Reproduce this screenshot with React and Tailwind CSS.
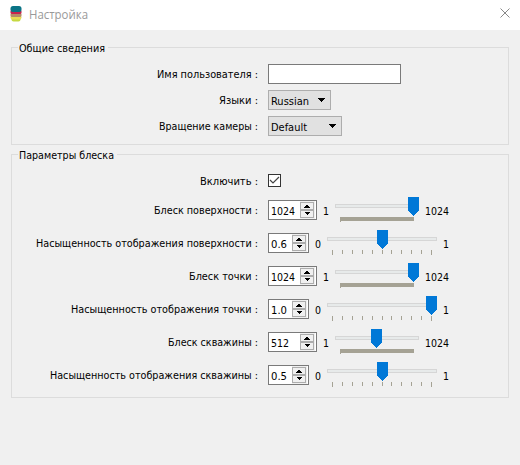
function Txt({ children, w, className = "" }) {
  return (
    <svg width={w} height="16" className={"block shrink-0 overflow-visible " + className}>
      <text x="0" y="12" textLength={w} lengthAdjust="spacingAndGlyphs" fill="currentColor">
        {children}
      </text>
    </svg>
  );
}

function Group({ title, titleWidth, className, children }) {
  return (
    <fieldset className={"relative ml-[11px] w-[498px] border border-[#dcdcdc] " + className}>
      <div className="absolute left-[6px] top-[-8px] bg-[#f0f0f0] pl-[1px] pr-[3px]">
        <Txt w={titleWidth}>{title}</Txt>
      </div>
      {children}
    </fieldset>
  );
}

function Row({ label, w, className = "", children }) {
  return (
    <div className={"flex h-5 items-center " + className}>
      <div className="mr-[10px] flex w-[246px] shrink-0 justify-end">
        <Txt w={w}>{label}</Txt>
      </div>
      {children}
    </div>
  );
}

function Select({ value, w, className }) {
  return (
    <div className={"flex h-5 items-center justify-between border border-[#adadad] bg-[#e1e1e1] pl-[2px] pr-[4px] " + className}>
      <Txt w={w} className="mt-[2px]">{value}</Txt>
      <svg width="8" height="4" shapeRendering="crispEdges">
        <path d="M0 0h7v1h-1v1h-1v1h-1v1h-1v-1h-1v-1h-1v-1h-1z" />
      </svg>
    </div>
  );
}

function SpinBox({ value, w, className }) {
  return (
    <div className={"flex h-5 shrink-0 items-center justify-between border border-[#7a7a7a] bg-white pr-px pl-[2px] " + className}>
      <Txt w={w} className="mt-[2px]">{value}</Txt>
      <svg width="15" height="18" shapeRendering="crispEdges">
        <path fill="#f0f0f0" d="M0 0h15v18h-15z" />
        <path fill="#f0f0f0" stroke="#adadad" d="M.5 1.5h13v7h-13zM.5 9.5h13v7h-13z" />
        <path d="M6 4h2v1h1v1h1v1h-6v-1h1v-1h1zM5 11h5v1h-1v1h-1v1h-1v-1h-1v-1h-1z" />
      </svg>
    </div>
  );
}

const TICKS = [5, 15, 25, 35, 45, 55, 64, 74, 84, 94, 104];

function Slider({ dense, at }) {
  const width = dense ? 84 : 110;
  return (
    <svg width={width} height="26" shapeRendering="crispEdges" className="shrink-0">
      <rect x=".5" y="7.5" width={width - 1} height="3" fill="#e7eaea" stroke="#d6d6d6" />
      {dense ? (
        <path fill="#a5a294" d="M5 20h74v4h-73v1h-1z" />
      ) : (
        TICKS.map((x, i) => (
          <rect key={x} x={x} y="20" width="1" height={i === 0 || i === 10 ? 5 : 4} fill="#a5a294" />
        ))
      )}
      <path
        fill="#0078d7"
        d="M0 0h11v14h-1v1h-1v1h-1v1h-1v1h-1v1h-1v-1h-1v-1h-1v-1h-1v-1h-1v-1h-1z"
        transform={`translate(${at} 0)`}
      />
    </svg>
  );
}

const ROWS = [
  { label: "Блеск поверхности :", w: 104, value: "1024", vw: 24, dense: true, at: 73 },
  { label: "Насыщенность отображения поверхности :", w: 222, value: "0.6", vw: 16, at: 50 },
  { label: "Блеск точки :", w: 69, value: "1024", vw: 24, dense: true, at: 73 },
  { label: "Насыщенность отображения точки :", w: 187, value: "1.0", vw: 16, at: 99 },
  { label: "Блеск скважины :", w: 90, value: "512", vw: 18, dense: true, at: 36 },
  { label: "Насыщенность отображения скважины :", w: 208, value: "0.5", vw: 16, at: 50 },
];

export default function App() {
  return (
    <div className="h-[465px] w-[520px] overflow-hidden bg-[#f0f0f0] font-['DejaVu_Sans_Condensed','DejaVu_Sans',sans-serif] text-[11px] text-black">
      <header className="flex h-[30px] items-center bg-white">
        <svg width="14" height="18" className="ml-[9px] mt-[-2px]">
          <rect x="2.5" y="12.5" width="9" height="4" rx="2" fill="#c6d943" />
          <rect x="1.5" y="10.5" width="11" height="4" rx="2" fill="#eadb54" />
          <rect x="1.5" y="8" width="11" height="4" rx="1.5" fill="#b58b68" />
          <rect x="1.5" y="5" width="11" height="4" rx="1.5" fill="#c9234d" />
          <rect x="1.5" y="1" width="11" height="6" rx="2.5" fill="#0b7486" />
        </svg>
        <Txt w={59} className="ml-[6px] mt-[-1px] font-['Open_Sans','Noto_Sans',sans-serif] text-[12px] text-[#999999]">
          Настройка
        </Txt>
        <svg width="11" height="11" className="ml-auto mr-[9px] mt-[-3px]" stroke="#888888">
          <path d="M.5 .5l9 9M9.5 .5l-9 9" />
        </svg>
      </header>

      <Group title="Общие сведения" titleWidth={86} className="mt-[17px] flex h-[98px] flex-col gap-[6px] pt-[16px]">
        <Row label="Имя пользователя :" w={101}>
          <input className="h-5 w-[133px] border border-[#7a7a7a] bg-white outline-none" />
        </Row>
        <Row label="Языки :" w={39}>
          <Select value="Russian" w={38} className="w-[63px]" />
        </Row>
        <Row label="Вращение камеры :" w={99}>
          <Select value="Default" w={36} className="w-[74px]" />
        </Row>
      </Group>

      <Group title="Параметры блеска" titleWidth={95} className="mt-[9px] flex h-[244px] flex-col gap-[13px] pt-[16px]">
        <Row label="Включить :" w={58} className="-mb-[4px]">
          <svg width="13" height="13" className="mt-[-1px]">
            <rect x=".5" y=".5" width="12" height="12" fill="white" stroke="#333333" />
            <path d="M2 6l3 3l6-6" fill="none" stroke="#444444" strokeWidth="1.2" />
          </svg>
        </Row>
        {ROWS.map((r) => (
          <Row key={r.label} label={r.label} w={r.w}>
            <SpinBox value={r.value} w={r.vw} className={r.dense ? "w-[49px]" : "w-[41px]"} />
            <div className={r.dense ? "flex w-[18px] shrink-0 pl-[6px]" : "flex w-[18px] shrink-0 pl-[6px]"}>
              <Txt w={6} className="mt-px">{r.dense ? "1" : "0"}</Txt>
            </div>
            <Slider dense={r.dense} at={r.at} />
            <div className="pl-[6px]">
              <Txt w={r.dense ? 24 : 6} className="mt-px">{r.dense ? "1024" : "1"}</Txt>
            </div>
          </Row>
        ))}
      </Group>
    </div>
  );
}
